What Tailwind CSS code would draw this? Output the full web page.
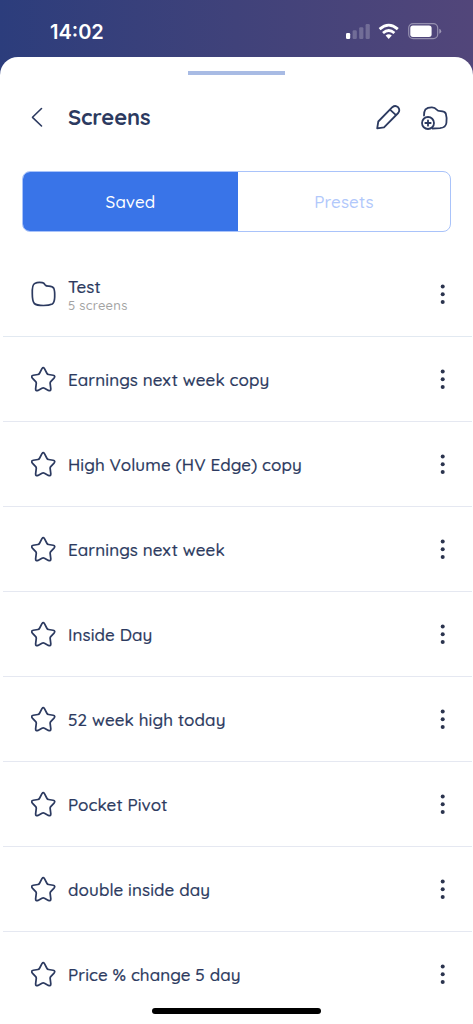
<!DOCTYPE html>
<html lang="en">
<head>
<meta charset="utf-8">
<title>Screens</title>
<script src="https://cdn.jsdelivr.net/npm/@tailwindcss/browser@4"></script>
</head>
<body class="w-[473px] h-[1024px] overflow-hidden bg-white font-['Quicksand','Lato',sans-serif] text-[#2c3a60]">
<svg class="hidden">
  <symbol id="star" viewBox="0 0 26 26"><path d="M11.400 2.200Q12.700 .2 14 2.200L16.500 7Q17.100 8.100 18.200 8.300L23 9.100Q25.700 9.800 24 12L20.500 15.700Q19.800 16.600 19.900 17.600L20.600 23.300Q20.600 25.700 18.100 24.900L14 22.600Q12.700 22 11.400 22.600L7.300 24.900Q4.800 25.700 4.800 23.300L5.500 17.600Q5.600 16.600 4.900 15.700L1.400 12Q-.3 9.800 2.400 9.100L7.200 8.300Q8.300 8.100 8.900 7Z" fill="none" stroke="currentColor" stroke-width="1.800" stroke-linejoin="round"/></symbol>
  <symbol id="dots" viewBox="0 0 6 22"><g fill="#2b344e"><circle cx="2.700" cy="3.400" r="2"/><circle cx="2.700" cy="11.300" r="2"/><circle cx="2.700" cy="19.100" r="2"/></g></symbol>
</svg>
<div class="flex h-full flex-col bg-linear-to-r from-[#2c3d7c] via-[#40427a] to-[#52467a]">
  <header class="flex h-[57px] shrink-0 items-start justify-between pl-[50px] pr-[31px]">
    <div class="pt-[20px] font-['Inter',sans-serif] text-[20px] leading-[25px] font-semibold text-white">14:02</div>
    <svg class="mt-[20px]" width="97" height="22" viewBox="345 20 97 22">
      <rect x="346" y="33" width="4.2" height="6" rx="1.2" fill="#fff"/>
      <g fill="#fff" opacity=".22"><rect x="352.600" y="30.300" width="4.200" height="8.700" rx="1.200"/><rect x="359.200" y="27.200" width="4.200" height="11.800" rx="1.200"/><rect x="365.600" y="24" width="4.200" height="15" rx="1.200"/></g>
      <g fill="none" stroke="#fff" stroke-width="2.800"><path d="M379.600 29.100Q388.700 21.100 397.800 29.100"/><path d="M383 33Q388.700 28 394.400 33"/></g>
      <path d="M385.600 35.600Q388.700 33 391.800 35.600L388.700 39Z" fill="#fff"/>
      <rect x="408.700" y="23.700" width="29" height="15" rx="4.400" fill="none" stroke="#fff" stroke-opacity=".4" stroke-width="1.200"/>
      <rect x="410.300" y="25.500" width="21.300" height="11.400" rx="2.600" fill="#fff"/>
      <path d="M439.300 28.700Q441.200 29.400 441.200 31.200T439.300 33.700Z" fill="#fff" opacity=".45"/>
    </svg>
  </header>
  <main class="flex flex-1 flex-col rounded-t-[18px] bg-white">
    <div class="mt-[14px] ml-[188px] h-[4px] w-[97px] shrink-0 bg-[#a8bbe4]"></div>
    <div class="mt-[22px] flex h-[40px] shrink-0 items-center pl-[30px] pr-[24px]">
      <svg width="14" height="22" viewBox="30 106 14 22"><path d="M41.500 108.500L32.500 117.300L41.500 126" fill="none" stroke="currentColor" stroke-width="1.600" stroke-linecap="round" stroke-linejoin="round"/></svg>
      <h1 class="ml-[24px] w-[200px] text-[22px] leading-[28px] font-bold tracking-[-0.1px]">Screens</h1>
      <svg class="ml-auto" width="76" height="30" viewBox="373 102 76 30" fill="none" stroke="currentColor" stroke-width="1.800" stroke-linecap="round" stroke-linejoin="round">
        <path d="M377.200 128.300L378.300 121.500L392.300 107.200Q395.300 104.700 398 107.200Q400.500 110 398.200 113L384 127.300Z"/><path d="M390.800 110.300L395.500 114.600"/>
        <path d="M424 115.500Q424 111.500 425.500 109.300Q427.500 107.300 432 107.400Q435 107.500 436.500 109.500Q437.700 111.100 440.500 111.100Q444.500 111 445.800 113.500Q447 117 446.400 123Q445.800 127.600 440 128.100L432.500 128.500"/><circle cx="428" cy="123" r="6"/><path d="M428 120.300V125.700M425.300 123H430.700"/>
      </svg>
    </div>
    <div class="mt-[34px] ml-[22px] flex h-[61px] w-[429px] shrink-0 overflow-hidden rounded-[8px] border border-[#a9c3fa] text-[17px]">
      <div class="flex w-[215px] items-center justify-center bg-[#3974e8] font-medium tracking-[0.1px] text-white">Saved</div>
      <div class="flex flex-1 items-center justify-center font-medium tracking-[0.1px] text-[#b1c8fb]">Presets</div>
    </div>
    <ul class="mt-[20px] ml-[3px] w-[469px] text-[17px] leading-[22px] font-medium tracking-[0.1px] [-webkit-text-stroke:0.2px_#2c3a60]">
      <li class="flex h-[85px] items-center border-b border-[#e2e9f1] pl-[28px] pr-[26px]">
        <svg width="25" height="26" viewBox="0 0 25 26"><path d="M1.300 13Q1 3.500 3.700 2.500Q7 .9 11.300 1.700Q13 2.100 14 3.700Q15 5.200 17.500 5.200Q21.500 5.100 22.800 7.300Q23.900 10 23.700 16Q23.500 21.500 21.300 23Q18 24.500 12.500 24.500Q5.500 24.500 3.300 22.500Q1.300 20 1.300 13Z" fill="none" stroke="currentColor" stroke-width="1.700"/></svg>
        <div class="ml-[12px] flex-1"><div class="h-[21px]">Test</div><div class="text-[13px] leading-[16px] font-medium tracking-[0.25px] text-[#a3a3a3] [-webkit-text-stroke:0px]">5 screens</div></div>
        <svg width="6" height="22"><use href="#dots"/></svg>
      </li>
      <li class="flex h-[85px] items-center border-b border-[#e5e8f1] pl-[28px] pr-[26px]"><svg width="25" height="26"><use href="#star"/></svg><span class="ml-[12px] flex-1 pt-[2px]">Earnings next week copy</span><svg width="6" height="22"><use href="#dots"/></svg></li>
      <li class="flex h-[85px] items-center border-b border-[#e5e8f1] pl-[28px] pr-[26px]"><svg width="25" height="26"><use href="#star"/></svg><span class="ml-[12px] flex-1 pt-[2px]">High Volume (HV Edge) copy</span><svg width="6" height="22"><use href="#dots"/></svg></li>
      <li class="flex h-[85px] items-center border-b border-[#e5e8f1] pl-[28px] pr-[26px]"><svg width="25" height="26"><use href="#star"/></svg><span class="ml-[12px] flex-1 pt-[2px]">Earnings next week</span><svg width="6" height="22"><use href="#dots"/></svg></li>
      <li class="flex h-[85px] items-center border-b border-[#e5e8f1] pl-[28px] pr-[26px]"><svg width="25" height="26"><use href="#star"/></svg><span class="ml-[12px] flex-1 pt-[2px]">Inside Day</span><svg width="6" height="22"><use href="#dots"/></svg></li>
      <li class="flex h-[85px] items-center border-b border-[#e5e8f1] pl-[28px] pr-[26px]"><svg width="25" height="26"><use href="#star"/></svg><span class="ml-[12px] flex-1 pt-[2px]">52 week high today</span><svg width="6" height="22"><use href="#dots"/></svg></li>
      <li class="flex h-[85px] items-center border-b border-[#e5e8f1] pl-[28px] pr-[26px]"><svg width="25" height="26"><use href="#star"/></svg><span class="ml-[12px] flex-1 pt-[2px]">Pocket Pivot</span><svg width="6" height="22"><use href="#dots"/></svg></li>
      <li class="flex h-[85px] items-center border-b border-[#e5e8f1] pl-[28px] pr-[26px]"><svg width="25" height="26"><use href="#star"/></svg><span class="ml-[12px] flex-1 pt-[2px]">double inside day</span><svg width="6" height="22"><use href="#dots"/></svg></li>
      <li class="flex h-[84px] items-center pl-[28px] pr-[26px]"><svg width="25" height="26"><use href="#star"/></svg><span class="ml-[12px] flex-1 pt-[2px]">Price % change 5 day</span><svg width="6" height="22"><use href="#dots"/></svg></li>
    </ul>
  </main>
</div>
<div class="absolute top-[1008px] left-[152px] h-[6px] w-[169px] rounded-full bg-black"></div>
</body>
</html>
